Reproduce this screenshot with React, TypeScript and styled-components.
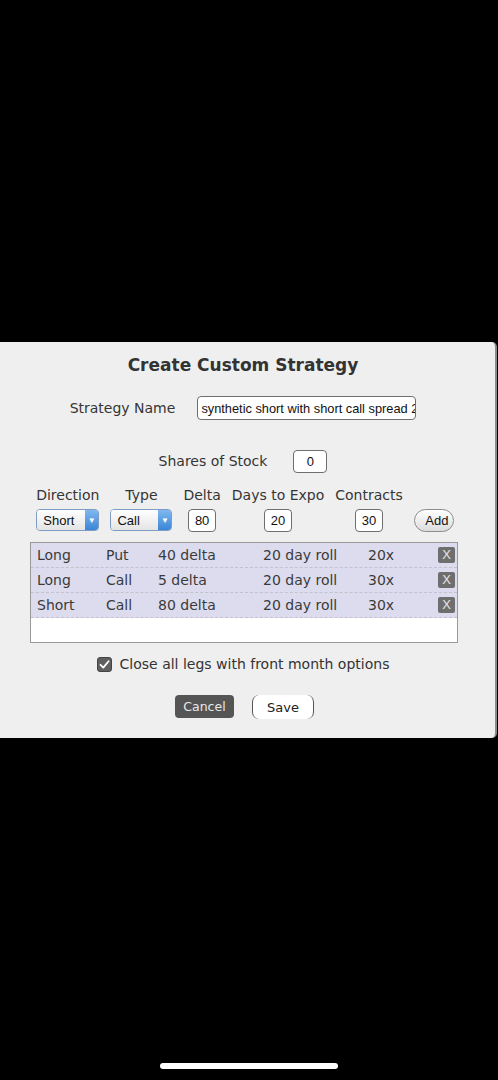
import React from "react";
import styled, { createGlobalStyle } from "styled-components";

const GlobalStyle = createGlobalStyle`
  html, body {
    margin: 0;
    padding: 0;
    background: #000000;
  }
`;

const Screen = styled.div`
  position: relative;
  display: flex;
  align-items: center;
  height: 1080px;
  width: 498px;
  overflow: hidden;
`;

const Dialog = styled.div`
  box-sizing: border-box;
  width: 497px;
  height: 396px;
  background: #efefef;
  border-right: 2px solid #8a8a8a;
  border-radius: 0 5px 5px 0;
  padding: 11px 9px 0 0;
  display: flex;
  flex-direction: column;
  align-items: center;
  font-family: "DejaVu Sans", Verdana, sans-serif;
  color: #353535;
`;

const Title = styled.h2`
  margin: 0;
  font-size: 17px;
  line-height: 24px;
  font-weight: bold;
  color: #333333;
`;

const FieldRow = styled.div<{ $gap: number; $top: number }>`
  display: flex;
  align-items: center;
  gap: ${(p) => p.$gap}px;
  margin-top: ${(p) => p.$top}px;
`;

const Label = styled.span`
  font-size: 14px;
  line-height: 17px;
`;

const TextBox = styled.div<{ $width: number; $height?: number }>`
  box-sizing: border-box;
  width: ${(p) => p.$width}px;
  height: ${(p) => p.$height ?? 23}px;
  background: #ffffff;
  border: 1px solid #6f6f6f;
  border-radius: 4px;
  font-family: "Liberation Sans", Arial, sans-serif;
  font-size: 13px;
  color: #111111;
  display: flex;
  align-items: center;
  justify-content: center;
  overflow: hidden;
  white-space: nowrap;
`;

const NameBox = styled(TextBox)`
  justify-content: flex-start;
  padding-left: 3px;
  font-size: 12.8px;
`;

const Columns = styled.div`
  display: flex;
  align-items: flex-start;
  gap: 11px;
  margin-top: 14px;
  margin-left: 4px;
`;

const Column = styled.div`
  display: flex;
  flex-direction: column;
  align-items: center;
  gap: 5px;
`;

const Select = styled.div<{ $width: number }>`
  box-sizing: border-box;
  width: ${(p) => p.$width}px;
  height: 22px;
  display: flex;
  border: 1px solid #7d9cc4;
  border-radius: 4px;
  overflow: hidden;
  font-family: "Liberation Sans", Arial, sans-serif;
  font-size: 13px;
  color: #111111;
`;

const SelectValue = styled.div`
  flex: 1;
  display: flex;
  align-items: center;
  padding-left: 6px;
  background: linear-gradient(#ffffff, #e4e4e4);
`;

const SelectArrow = styled.div`
  width: 13px;
  display: flex;
  align-items: center;
  justify-content: center;
  background: linear-gradient(#80b8ee, #3a86d6);
  color: #ffffff;
  font-size: 8px;
`;

const AddButton = styled.button`
  box-sizing: border-box;
  width: 40px;
  height: 23px;
  margin-top: 22px;
  padding: 0 0 0 6px;
  border: 1px solid #8d8d8d;
  border-radius: 12px;
  background: linear-gradient(#ffffff, #dcdcdc);
  font-family: "Liberation Sans", Arial, sans-serif;
  font-size: 13px;
  color: #111111;
`;

const List = styled.div`
  box-sizing: border-box;
  width: 428px;
  height: 101px;
  margin-top: 10px;
  margin-left: 2px;
  background: #ffffff;
  border: 1px solid #9a9a9a;
`;

const LegRow = styled.div`
  display: grid;
  grid-template-columns: 69px 52px 105px 105px 70px 18px;
  align-items: center;
  height: 24px;
  padding-left: 6px;
  background: #dddcef;
  border-bottom: 1px dashed #c2c2cc;
  font-size: 14px;
  color: #3a3a3a;
`;

const RemoveButton = styled.span`
  width: 17px;
  height: 16px;
  border-radius: 2px;
  background: #6e6e6e;
  color: #e6e6e6;
  font-family: "Liberation Sans", Arial, sans-serif;
  font-size: 13px;
  line-height: 16px;
  text-align: center;
`;

const CheckRow = styled.label`
  display: flex;
  align-items: center;
  gap: 8px;
  margin-top: 12px;
  font-size: 14px;
  line-height: 18px;
  color: #333333;
`;

const CheckBox = styled.span`
  box-sizing: border-box;
  width: 15px;
  height: 15px;
  border-radius: 3px;
  background: #5f5f5f;
  border: 1px solid #444444;
  display: flex;
  align-items: center;
  justify-content: center;
`;

const Buttons = styled.div`
  display: flex;
  gap: 18px;
  margin-top: 22px;
  margin-left: 3px;
`;

const CancelButton = styled.button`
  width: 59px;
  height: 23px;
  padding: 0;
  border: none;
  border-radius: 4px;
  background: #555555;
  color: #e8e8e8;
  font-family: "DejaVu Sans", Verdana, sans-serif;
  font-size: 12.5px;
`;

const SaveButton = styled.button`
  box-sizing: border-box;
  width: 62px;
  height: 24px;
  padding: 0;
  background: #ffffff;
  border: none;
  border-left: 1.5px solid #555555;
  border-right: 1.5px solid #555555;
  border-radius: 7px;
  color: #222222;
  font-family: "DejaVu Sans", Verdana, sans-serif;
  font-size: 13px;
`;

const HomeIndicator = styled.div`
  position: absolute;
  left: 160px;
  bottom: 11px;
  width: 178px;
  height: 6px;
  border-radius: 3px;
  background: #ffffff;
`;

const legs = [
  { dir: "Long", type: "Put", delta: "40 delta", roll: "20 day roll", qty: "20x" },
  { dir: "Long", type: "Call", delta: "5 delta", roll: "20 day roll", qty: "30x" },
  { dir: "Short", type: "Call", delta: "80 delta", roll: "20 day roll", qty: "30x" },
];

export default function App() {
  return (
    <Screen>
      <GlobalStyle />
      <Dialog>
        <Title>Create Custom Strategy</Title>
        <FieldRow $gap={22} $top={19}>
          <Label>Strategy Name</Label>
          <NameBox $width={219} $height={24}>
            synthetic short with short call spread 2
          </NameBox>
        </FieldRow>
        <FieldRow $gap={26} $top={30}>
          <Label>Shares of Stock</Label>
          <TextBox $width={34}>0</TextBox>
        </FieldRow>
        <Columns>
          <Column>
            <Label>Direction</Label>
            <Select $width={63}>
              <SelectValue>Short</SelectValue>
              <SelectArrow>▼</SelectArrow>
            </Select>
          </Column>
          <Column>
            <Label>Type</Label>
            <Select $width={62}>
              <SelectValue>Call</SelectValue>
              <SelectArrow>▼</SelectArrow>
            </Select>
          </Column>
          <Column>
            <Label>Delta</Label>
            <TextBox $width={28}>80</TextBox>
          </Column>
          <Column>
            <Label>Days to Expo</Label>
            <TextBox $width={28}>20</TextBox>
          </Column>
          <Column>
            <Label>Contracts</Label>
            <TextBox $width={28}>30</TextBox>
          </Column>
          <AddButton>Add</AddButton>
        </Columns>
        <List>
          {legs.map((leg, i) => (
            <LegRow key={i}>
              <span>{leg.dir}</span>
              <span>{leg.type}</span>
              <span>{leg.delta}</span>
              <span>{leg.roll}</span>
              <span>{leg.qty}</span>
              <RemoveButton>X</RemoveButton>
            </LegRow>
          ))}
        </List>
        <CheckRow>
          <CheckBox>
            <svg width="11" height="11" viewBox="0 0 11 11">
              <path d="M1.5 5.8 L4.3 8.6 L9.6 2.2" fill="none" stroke="#ffffff" strokeWidth="1.8" strokeLinecap="round" strokeLinejoin="round" />
            </svg>
          </CheckBox>
          Close all legs with front month options
        </CheckRow>
        <Buttons>
          <CancelButton>Cancel</CancelButton>
          <SaveButton>Save</SaveButton>
        </Buttons>
      </Dialog>
      <HomeIndicator />
    </Screen>
  );
}
